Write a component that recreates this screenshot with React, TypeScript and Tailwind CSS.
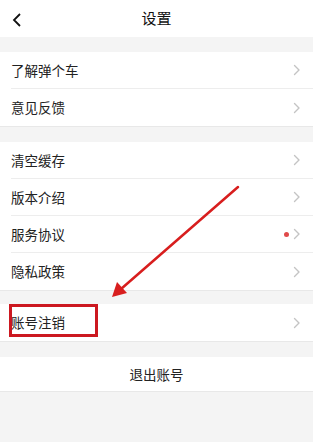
import React from "react";

const font = { fontFamily: '"Noto Sans CJK SC", "Noto Sans", sans-serif' };

function Chevron() {
  return (
    <svg width="8" height="12" viewBox="0 0 8 12" className="shrink-0">
      <path d="M1.5 1.5 L6 6 L1.5 10.5" fill="none" stroke="#c4c4c4" strokeWidth="1.4" strokeLinecap="round" strokeLinejoin="round" />
    </svg>
  );
}

function Row({ label, dot, last }: { label: string; dot?: boolean; last?: boolean }) {
  return (
    <div className="pl-[11px] bg-white">
      <div className={`h-[37px] flex items-center pr-[12px] ${last ? "" : "border-b border-[#ededed]"}`}>
        <span className="flex-1 text-[13.5px] text-[#222]">{label}</span>
        {dot && <span className="w-[5px] h-[5px] rounded-full bg-[#e04a4a] mr-[4px]" />}
        <Chevron />
      </div>
    </div>
  );
}

export default function App() {
  return (
    <div className="relative w-[313px] h-[442px] bg-[#f4f4f4] overflow-hidden" style={font}>
      <div className="h-[37px] bg-white flex items-center relative">
        <svg width="10" height="14" viewBox="0 0 10 14" className="absolute left-[12px] top-[13px]">
          <path d="M8 1 L2 7 L8 13" fill="none" stroke="#111" strokeWidth="1.8" strokeLinejoin="miter" />
        </svg>
        <div className="flex-1 text-center text-[15px] text-[#111]">设置</div>
      </div>
      <div className="h-[15px]" />
      <div className="border-b border-[#e8e8e8]">
        <Row label="了解弹个车" />
        <Row label="意见反馈" last />
      </div>
      <div className="h-[15px]" />
      <div className="border-b border-[#e8e8e8]">
        <Row label="清空缓存" />
        <Row label="版本介绍" />
        <Row label="服务协议" dot />
        <Row label="隐私政策" last />
      </div>
      <div className="h-[13px]" />
      <div className="border-b border-[#e8e8e8]">
        <Row label="账号注销" last />
      </div>
      <div className="h-[15px]" />
      <div className="h-[35px] bg-white flex items-center justify-center text-[13.5px] text-[#222] border-b border-[#e8e8e8]">
        退出账号
      </div>

      <div className="absolute left-[9px] top-[304px] w-[89px] h-[33px] border-[3px] border-[#cc1820]" />
      <svg className="absolute left-0 top-0" width="313" height="442" viewBox="0 0 313 442">
        <line x1="238" y1="187" x2="121" y2="289" stroke="#d81e1e" strokeWidth="2.5" strokeLinecap="round" />
        <polygon points="112,297 117,282 127,293" fill="#d81e1e" />
      </svg>
    </div>
  );
}
